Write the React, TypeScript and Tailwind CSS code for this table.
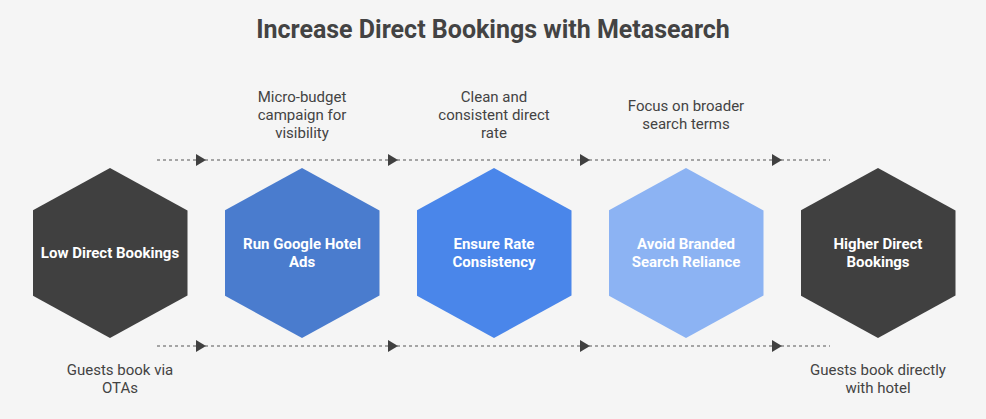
import type { ReactNode } from 'react'

type Step = {
  top?: ReactNode
  label: ReactNode
  color: string
  bottom?: ReactNode
  bottomClass?: string
}

const steps: Step[] = [
  {
    label: 'Low Direct Bookings',
    color: 'bg-[#404040]',
    bottom: (
      <>
        Guests book via
        <br />
        OTAs
      </>
    ),
    bottomClass: 'pl-5',
  },
  {
    top: (
      <>
        Micro-budget
        <br />
        campaign for
        <br />
        visibility
      </>
    ),
    label: (
      <>
        Run Google Hotel
        <br />
        Ads
      </>
    ),
    color: 'bg-[#4a7cce]',
  },
  {
    top: (
      <>
        Clean and
        <br />
        consistent direct
        <br />
        rate
      </>
    ),
    label: (
      <>
        Ensure Rate
        <br />
        Consistency
      </>
    ),
    color: 'bg-[#4a86ea]',
  },
  {
    top: (
      <>
        Focus on broader
        <br />
        search terms
      </>
    ),
    label: (
      <>
        Avoid Branded
        <br />
        Search Reliance
      </>
    ),
    color: 'bg-[#8cb3f3]',
  },
  {
    label: (
      <>
        Higher Direct
        <br />
        Bookings
      </>
    ),
    color: 'bg-[#404040]',
    bottom: (
      <>
        Guests book directly
        <br />
        with hotel
      </>
    ),
  },
]

// dotted connector with arrow heads half way between hexagons
function Connector() {
  const tips = [206, 398, 590, 782]
  return (
    <svg className="block w-full h-[12px]" viewBox="0 0 986 12">
      <line x1="157" y1="6" x2="830" y2="6" stroke="#8a8a8a" strokeWidth="1.5" strokeDasharray="3 3" />
      {tips.map((t) => (
        <polygon key={t} points={`${t - 10},0 ${t},6 ${t - 10},12`} fill="#404040" />
      ))}
    </svg>
  )
}

export default function App() {
  return (
    <div
      className="w-[986px] h-[419px] bg-[#f5f5f5] text-[#434343] overflow-hidden"
      style={{ fontFamily: 'Roboto, "Liberation Sans", sans-serif' }}
    >
      <h1 className="pt-[14px] text-center text-[25px] leading-[32px] font-bold text-[#434343]">
        Increase Direct Bookings with Metasearch
      </h1>

      <div className="mt-[30px] h-[78px] pl-[14px] grid grid-cols-[repeat(5,192px)]">
        {steps.map((s, i) => (
          <div key={i} className="flex items-center justify-center text-center text-[15px] leading-[18px]">
            <p>{s.top}</p>
          </div>
        ))}
      </div>

      <Connector />

      <div className="mt-[2px] pl-[14px] grid grid-cols-[repeat(5,192px)]">
        {steps.map((s, i) => (
          <div key={i} className="flex justify-center">
            <div
              className={`${s.color} w-[155px] h-[170px] flex items-center justify-center text-center text-white text-[15px] leading-[18px] font-bold [clip-path:polygon(50%_0,100%_25%,100%_75%,50%_100%,0_75%,0_25%)]`}
            >
              <p>{s.label}</p>
            </div>
          </div>
        ))}
      </div>

      <div className="mt-[2px]">
        <Connector />
      </div>

      <div className="mt-[9px] pl-[14px] grid grid-cols-[repeat(5,192px)]">
        {steps.map((s, i) => (
          <div key={i} className={`flex justify-center text-center text-[15px] leading-[18px] ${s.bottomClass ?? ''}`}>
            <p>{s.bottom}</p>
          </div>
        ))}
      </div>
    </div>
  )
}
